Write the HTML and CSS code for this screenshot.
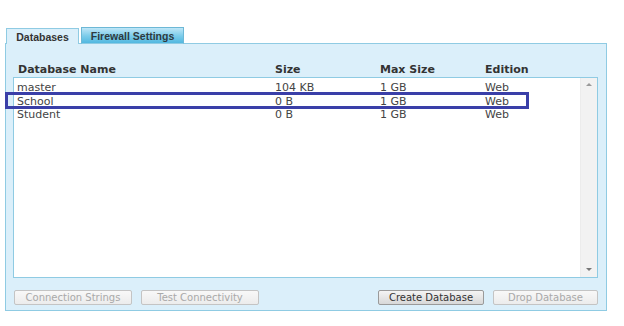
FILE: index.html
```
<!DOCTYPE html>
<html>
<head>
<meta charset="utf-8">
<link rel="stylesheet" href="styles.css">
</head>
<body>
<div class="page">
  <div class="tabs">
    <div class="tab tab-active">Databases</div>
    <div class="tab tab-inactive">Firewall Settings</div>
  </div>
  <div class="panel">
    <div class="cols header">
      <div class="c1">Database Name</div>
      <div>Size</div>
      <div>Max Size</div>
      <div>Edition</div>
    </div>
    <div class="list">
      <div class="rows">
        <div class="cols row"><div class="c1">master</div><div>104 KB</div><div>1 GB</div><div>Web</div></div>
        <div class="cols row"><div class="c1">School</div><div>0 B</div><div>1 GB</div><div>Web</div></div>
        <div class="cols row"><div class="c1">Student</div><div>0 B</div><div>1 GB</div><div>Web</div></div>
      </div>
      <div class="scrollbar">
        <span class="arrow up"></span>
        <span class="arrow down"></span>
      </div>
    </div>
    <div class="buttons">
      <button class="btn disabled w1">Connection Strings</button>
      <button class="btn disabled w2">Test Connectivity</button>
      <div class="spacer"></div>
      <button class="btn enabled w3">Create Database</button>
      <button class="btn disabled w4">Drop Database</button>
    </div>
  </div>
  <div class="highlight"></div>
</div>
</body>
</html>
```
FILE: styles.css
```
html, body {
  margin: 0;
  padding: 0;
  background: #ffffff;
}
body {
  font-family: "DejaVu Sans", Verdana, sans-serif;
  font-size: 11px;
  color: #3a3a3a;
  width: 624px;
  height: 326px;
  overflow: hidden;
}
.page {
  position: relative;
  padding-top: 27px;
  padding-left: 5px;
}
.tabs {
  display: flex;
  align-items: flex-end;
  height: 17px;
  position: relative;
  z-index: 2;
}
.tab {
  box-sizing: border-box;
  font-family: "Liberation Sans", Arial, sans-serif;
  font-weight: bold;
  font-size: 10.5px;
  color: #2e3a40;
  display: flex;
  align-items: center;
  justify-content: center;
  border: 1px solid #8fcbe3;
  border-bottom: none;
}
.tab-active {
  margin-left: 1px;
  width: 73px;
  height: 16px;
  background: #dbeffa;
  color: #333;
}
.tab-inactive {
  margin-left: 2px;
  width: 103px;
  height: 17px;
  background: linear-gradient(#bfe6f7, #79cbea 55%, #52b8e0);
  border-color: #6db8d6;
  border-bottom: 1px solid #8fcbe3;
}
.panel {
  box-sizing: border-box;
  width: 602px;
  height: 268px;
  margin-top: -1px;
  border: 1px solid #8fcbe3;
  background: #dbeffa;
  padding: 19px 8px 0 7px;
}
.cols {
  display: grid;
  grid-template-columns: 258px 105px 105px 1fr;
}
.header {
  font-weight: bold;
  font-size: 11px;
  color: #333;
  height: 14px;
  line-height: 14px;
  padding-left: 5px;
  grid-template-columns: 257px 105px 105px 1fr;
}
.list {
  box-sizing: border-box;
  height: 201px;
  background: #ffffff;
  border: 1px solid #8fcbe3;
  display: flex;
}
.rows {
  flex: 1;
  padding-top: 3px;
  padding-left: 3px;
}
.row {
  height: 13.5px;
  line-height: 13px;
  color: #444;
}
.scrollbar {
  width: 16px;
  background: #f2f2f2;
  border-left: 1px solid #ececec;
  display: flex;
  flex-direction: column;
  justify-content: space-between;
  align-items: center;
  padding: 5px 0 6px;
}
.arrow {
  width: 0;
  height: 0;
  border-left: 3px solid transparent;
  border-right: 3px solid transparent;
}
.arrow.up {
  border-bottom: 3px solid #9a9a9a;
}
.arrow.down {
  border-top: 3px solid #777;
}
.buttons {
  display: flex;
  margin-top: 12px;
  padding-left: 1px;
}
.spacer {
  flex: 1;
}
.btn {
  box-sizing: border-box;
  height: 15px;
  font-family: "DejaVu Sans", Verdana, sans-serif;
  font-size: 10px;
  line-height: 13px;
  padding: 0;
  border-radius: 2px;
  margin-right: 9px;
}
.btn.disabled {
  color: #a9a9a9;
  background: linear-gradient(#f8f8f8, #ececec);
  border: 1px solid #c4c4c4;
}
.btn.enabled {
  color: #333;
  background: linear-gradient(#f4f4f4, #d8d8d8);
  border: 1px solid #9a9a9a;
}
.w1 { width: 118px; }
.w2 { width: 118px; }
.w3 { width: 106px; }
.w4 { width: 105px; margin-right: 0; }
.highlight {
  position: absolute;
  left: 5px;
  top: 92px;
  width: 524px;
  height: 17px;
  box-sizing: border-box;
  border: 3px solid #3a3fa8;
}
```
